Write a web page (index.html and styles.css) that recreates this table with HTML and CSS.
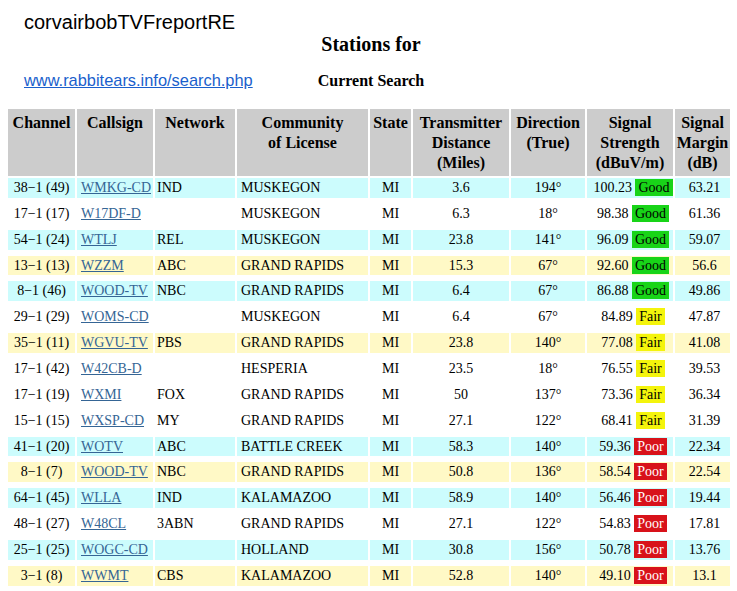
FILE: index.html
```html
<!DOCTYPE html>
<html>
<head>
<meta charset="utf-8">
<link rel="stylesheet" href="styles.css">
</head>
<body>
<div class="top">
  <div class="title">corvairbobTVFreportRE</div>
  <div class="heading">Stations for</div>
  <div class="subrow">
    <a class="site" href="#">www.rabbitears.info/search.php</a>
    <span class="current">Current Search</span>
    <span></span>
  </div>
</div>
<table class="stations">
  <thead>
    <tr>
      <th class="h-ch">Channel</th>
      <th class="h-cs">Callsign</th>
      <th class="h-nw">Network</th>
      <th class="h-cm">Community<br>of License</th>
      <th class="h-st">State</th>
      <th class="h-ds">Transmitter Distance (Miles)</th>
      <th class="h-dr">Direction (True)</th>
      <th class="h-ss">Signal Strength (dBuV/m)</th>
      <th class="h-mg">Signal Margin (dB)</th>
    </tr>
  </thead>
  <tbody>
    <tr class="cy"><td class="ch">38&minus;1 (49)</td><td class="cs"><a href="#">WMKG-CD</a></td><td class="nw">IND</td><td class="cm">MUSKEGON</td><td class="st">MI</td><td class="ds">3.6</td><td class="dr">194°</td><td class="ss">100.23 <span class="good">Good</span></td><td class="mg">63.21</td></tr>
    <tr class="wh"><td class="ch">17&minus;1 (17)</td><td class="cs"><a href="#">W17DF-D</a></td><td class="nw"></td><td class="cm">MUSKEGON</td><td class="st">MI</td><td class="ds">6.3</td><td class="dr">18°</td><td class="ss">98.38 <span class="good">Good</span></td><td class="mg">61.36</td></tr>
    <tr class="cy"><td class="ch">54&minus;1 (24)</td><td class="cs"><a href="#">WTLJ</a></td><td class="nw">REL</td><td class="cm">MUSKEGON</td><td class="st">MI</td><td class="ds">23.8</td><td class="dr">141°</td><td class="ss">96.09 <span class="good">Good</span></td><td class="mg">59.07</td></tr>
    <tr class="ye"><td class="ch">13&minus;1 (13)</td><td class="cs"><a href="#">WZZM</a></td><td class="nw">ABC</td><td class="cm">GRAND RAPIDS</td><td class="st">MI</td><td class="ds">15.3</td><td class="dr">67°</td><td class="ss">92.60 <span class="good">Good</span></td><td class="mg">56.6</td></tr>
    <tr class="cy"><td class="ch">8&minus;1 (46)</td><td class="cs"><a href="#">WOOD-TV</a></td><td class="nw">NBC</td><td class="cm">GRAND RAPIDS</td><td class="st">MI</td><td class="ds">6.4</td><td class="dr">67°</td><td class="ss">86.88 <span class="good">Good</span></td><td class="mg">49.86</td></tr>
    <tr class="wh"><td class="ch">29&minus;1 (29)</td><td class="cs"><a href="#">WOMS-CD</a></td><td class="nw"></td><td class="cm">MUSKEGON</td><td class="st">MI</td><td class="ds">6.4</td><td class="dr">67°</td><td class="ss">84.89 <span class="fair">Fair</span></td><td class="mg">47.87</td></tr>
    <tr class="ye"><td class="ch">35&minus;1 (11)</td><td class="cs"><a href="#">WGVU-TV</a></td><td class="nw">PBS</td><td class="cm">GRAND RAPIDS</td><td class="st">MI</td><td class="ds">23.8</td><td class="dr">140°</td><td class="ss">77.08 <span class="fair">Fair</span></td><td class="mg">41.08</td></tr>
    <tr class="wh"><td class="ch">17&minus;1 (42)</td><td class="cs"><a href="#">W42CB-D</a></td><td class="nw"></td><td class="cm">HESPERIA</td><td class="st">MI</td><td class="ds">23.5</td><td class="dr">18°</td><td class="ss">76.55 <span class="fair">Fair</span></td><td class="mg">39.53</td></tr>
    <tr class="wh"><td class="ch">17&minus;1 (19)</td><td class="cs"><a href="#">WXMI</a></td><td class="nw">FOX</td><td class="cm">GRAND RAPIDS</td><td class="st">MI</td><td class="ds">50</td><td class="dr">137°</td><td class="ss">73.36 <span class="fair">Fair</span></td><td class="mg">36.34</td></tr>
    <tr class="wh"><td class="ch">15&minus;1 (15)</td><td class="cs"><a href="#">WXSP-CD</a></td><td class="nw">MY</td><td class="cm">GRAND RAPIDS</td><td class="st">MI</td><td class="ds">27.1</td><td class="dr">122°</td><td class="ss">68.41 <span class="fair">Fair</span></td><td class="mg">31.39</td></tr>
    <tr class="cy"><td class="ch">41&minus;1 (20)</td><td class="cs"><a href="#">WOTV</a></td><td class="nw">ABC</td><td class="cm">BATTLE CREEK</td><td class="st">MI</td><td class="ds">58.3</td><td class="dr">140°</td><td class="ss">59.36 <span class="poor">Poor</span></td><td class="mg">22.34</td></tr>
    <tr class="ye"><td class="ch">8&minus;1 (7)</td><td class="cs"><a href="#">WOOD-TV</a></td><td class="nw">NBC</td><td class="cm">GRAND RAPIDS</td><td class="st">MI</td><td class="ds">50.8</td><td class="dr">136°</td><td class="ss">58.54 <span class="poor">Poor</span></td><td class="mg">22.54</td></tr>
    <tr class="cy"><td class="ch">64&minus;1 (45)</td><td class="cs"><a href="#">WLLA</a></td><td class="nw">IND</td><td class="cm">KALAMAZOO</td><td class="st">MI</td><td class="ds">58.9</td><td class="dr">140°</td><td class="ss">56.46 <span class="poor">Poor</span></td><td class="mg">19.44</td></tr>
    <tr class="wh"><td class="ch">48&minus;1 (27)</td><td class="cs"><a href="#">W48CL</a></td><td class="nw">3ABN</td><td class="cm">GRAND RAPIDS</td><td class="st">MI</td><td class="ds">27.1</td><td class="dr">122°</td><td class="ss">54.83 <span class="poor">Poor</span></td><td class="mg">17.81</td></tr>
    <tr class="cy"><td class="ch">25&minus;1 (25)</td><td class="cs"><a href="#">WOGC-CD</a></td><td class="nw"></td><td class="cm">HOLLAND</td><td class="st">MI</td><td class="ds">30.8</td><td class="dr">156°</td><td class="ss">50.78 <span class="poor">Poor</span></td><td class="mg">13.76</td></tr>
    <tr class="ye"><td class="ch">3&minus;1 (8)</td><td class="cs"><a href="#">WWMT</a></td><td class="nw">CBS</td><td class="cm">KALAMAZOO</td><td class="st">MI</td><td class="ds">52.8</td><td class="dr">140°</td><td class="ss">49.10 <span class="poor">Poor</span></td><td class="mg">13.1</td></tr>
  </tbody>
</table>
</body>
</html>
```
FILE: styles.css
```css
body {
  margin: 0;
  background: #ffffff;
  color: #000000;
  font-family: "Liberation Serif", "Times New Roman", serif;
}

.top {
  padding: 12px 19px 0 24px;
}

.title {
  font-family: "Liberation Sans", Arial, sans-serif;
  font-size: 20px;
  line-height: 21px;
}

.heading {
  text-align: center;
  font-weight: bold;
  font-size: 20px;
  line-height: 22px;
}

.subrow {
  margin-top: 15px;
  display: grid;
  grid-template-columns: 1fr auto 1fr;
  align-items: baseline;
  line-height: 20px;
}

.site {
  font-family: "Liberation Sans", Arial, sans-serif;
  font-size: 16.4px;
  color: #1a5fcc;
  text-decoration: underline;
  justify-self: start;
}

.current {
  font-weight: bold;
  font-size: 16px;
}

.stations {
  margin: 16px 0 0 6px;
  width: 726px;
  table-layout: fixed;
  border-collapse: separate;
  border-spacing: 2px;
}

.stations th {
  box-sizing: border-box;
  background: #cccccc;
  vertical-align: top;
  text-align: center;
  font-weight: bold;
  font-size: 16px;
  line-height: 20px;
  padding: 4px 1px 3px;
}

.h-ch { width: 67px; }
.h-cs { width: 76px; }
.h-nw { width: 80px; }
.h-cm { width: 131px; }
.h-st { width: 41px; }
.h-ds { width: 96px; }
.h-dr { width: 74px; }
.h-ss { width: 86px; }
.h-mg { width: 55px; }

.stations td {
  font-size: 14px;
  line-height: 16px;
  height: 19.87px;
  padding: 0;
  border-bottom: 4px solid transparent;
  background-clip: padding-box;
  vertical-align: middle;
  white-space: nowrap;
  overflow: visible;
}

.cy td { background-color: #ccfcfd; }
.ye td { background-color: #fff9c6; }
.wh td { background-color: #ffffff; }

.ch { text-align: center; }
.cs { padding-left: 4px !important; }
.nw { padding-left: 2px !important; }
.cm { padding-left: 4px !important; }
.st, .ds, .dr { text-align: center; }
.ss { text-align: center; padding-left: 6px !important; }
.mg { text-align: center; padding-left: 4px !important; }

.cs a {
  color: #356595;
  text-decoration: underline;
}

.good, .fair, .poor {
  padding: 1px 3px;
}
.good { background: #18d418; color: #000; }
.fair { background: #f4f40c; color: #000; }
.poor { background: #d8121a; color: #ffffff; }
```
